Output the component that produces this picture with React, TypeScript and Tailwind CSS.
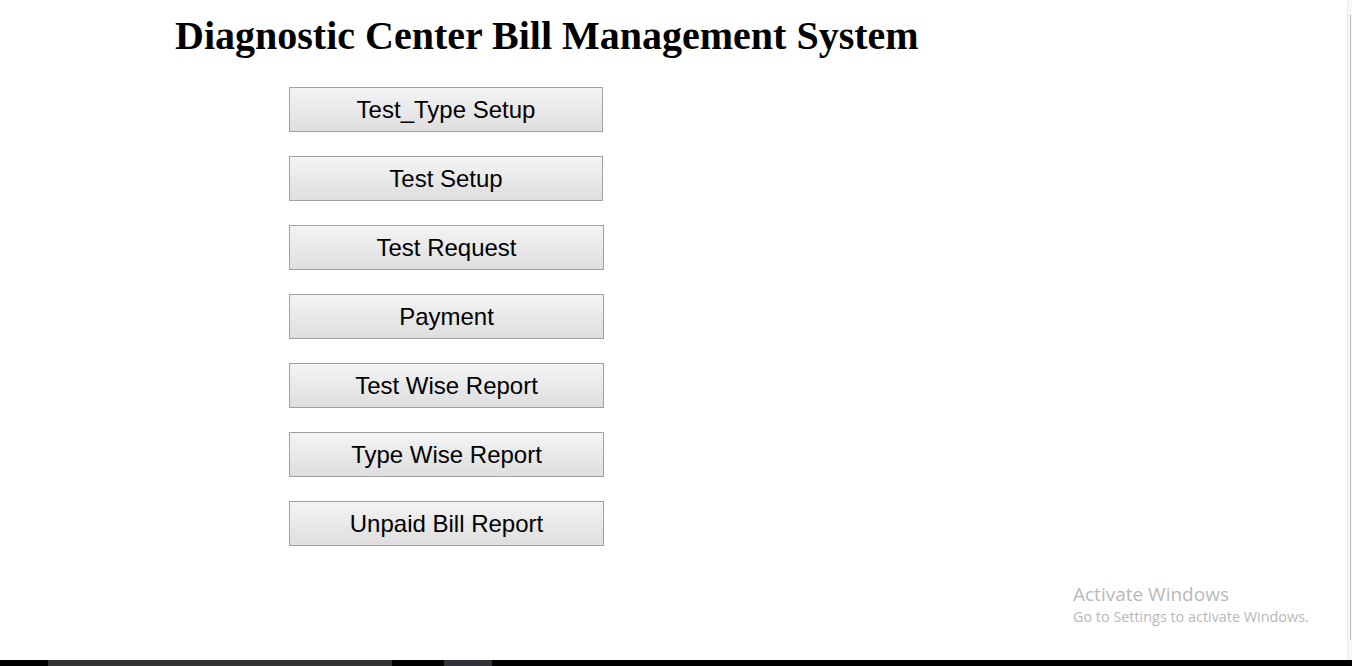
import React from 'react';

const items = [
  { label: 'Test_Type Setup', w: 'w-[314px]' },
  { label: 'Test Setup', w: 'w-[314px]' },
  { label: 'Test Request', w: 'w-[315px]' },
  { label: 'Payment', w: 'w-[315px]' },
  { label: 'Test Wise Report', w: 'w-[315px]' },
  { label: 'Type Wise Report', w: 'w-[315px]' },
  { label: 'Unpaid Bill Report', w: 'w-[315px]' },
];

export default function App() {
  return (
    <div className="relative w-[1352px] h-[666px] overflow-hidden bg-white">
      <div className="flex h-[660px]">
        {/* page */}
        <div className="flex-1">
          <h1
            className="pl-[175px] pt-[13px] text-[40px] font-bold leading-[45px] text-black whitespace-nowrap"
            style={{ fontFamily: '"Liberation Serif", "Times New Roman", serif' }}
          >
            Diagnostic Center Bill Management System
          </h1>
          <div className="flex flex-col gap-[24px] pl-[289px] pt-[29px]">
            {items.map((it) => (
              <button
                key={it.label}
                className={`${it.w} h-[45px] border border-[#a0a0a0] bg-gradient-to-b from-[#f4f4f4] to-[#dedede] text-[24px] leading-[28px] text-black`}
                style={{ fontFamily: '"Liberation Sans", Arial, sans-serif' }}
              >
                {it.label}
              </button>
            ))}
          </div>
        </div>
        {/* scrollbar */}
        <div className="w-[5px] border-l border-[#ececec] bg-[#f7f7f7] pt-[15px] pb-[20px]">
          <div className="ml-[2px] h-full w-px bg-[#bdbdbd]" />
        </div>
      </div>

      {/* taskbar strip */}
      <div className="flex h-[6px] bg-black">
        <div className="w-[48px]" />
        <div className="w-[344px] bg-[#333333]" />
        <div className="w-[52px]" />
        <div className="w-[48px] bg-[#2f3338]" />
      </div>

      {/* activation watermark */}
      <div
        className="absolute left-[1073px] top-[582px] text-[#b8b8b8]"
        style={{ fontFamily: '"Open Sans", "Segoe UI", sans-serif' }}
      >
        <div className="text-[19px] leading-[24px]">Activate Windows</div>
        <div className="text-[14.4px] leading-[22px]">Go to Settings to activate Windows.</div>
      </div>
    </div>
  );
}
